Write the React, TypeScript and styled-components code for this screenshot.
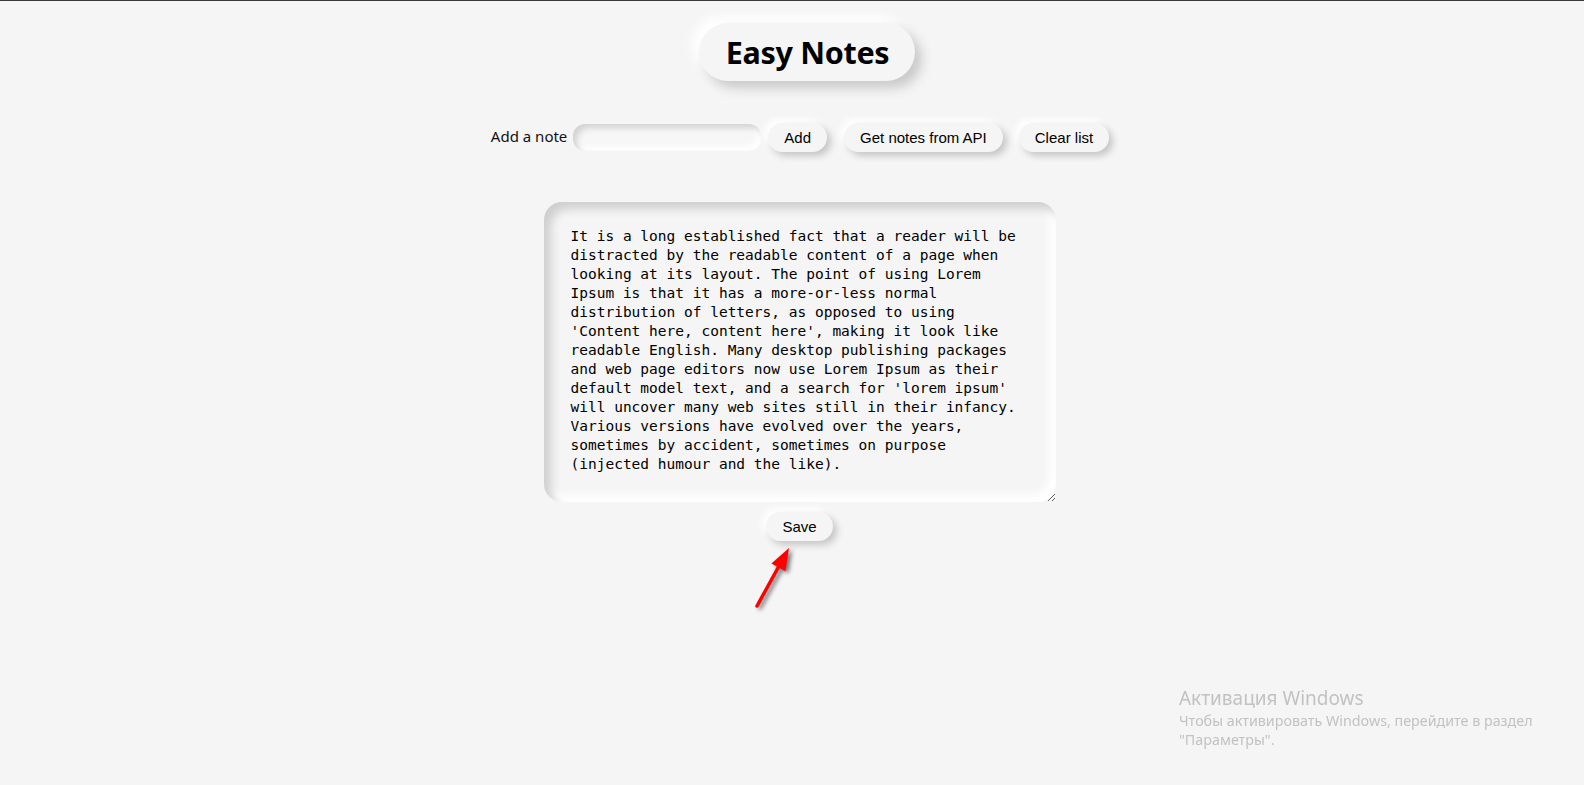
import React from "react";
import styled, { createGlobalStyle } from "styled-components";

const GlobalStyle = createGlobalStyle`
  html, body {
    margin: 0;
    padding: 0;
    background: #f5f5f5;
  }
  body {
    border-top: 1px solid #3a3a3a;
    min-height: 784px;
    font-family: "Noto Sans", "Open Sans", sans-serif;
  }
`;

const Page = styled.main`
  display: flex;
  flex-direction: column;
  align-items: center;
  padding-left: 15px;
`;

const Header = styled.header`
  margin-top: 22px;
  padding-left: 15px;
  display: flex;
  justify-content: center;
`;

const Title = styled.h1`
  margin: 0;
  height: 58px;
  padding: 0 26px 0 27px;
  display: flex;
  align-items: center;
  border-radius: 29px;
  background: #f5f5f5;
  font-family: "Noto Sans", "Open Sans", sans-serif;
  font-weight: 700;
  font-size: 30.5px;
  letter-spacing: -0.3px;
  color: #000;
  box-shadow: 7px 7px 12px #c9c9c9, -7px -7px 12px #ffffff;
`;

const Controls = styled.div`
  margin-top: 42px;
  display: flex;
  align-items: center;
  padding-left: 1px;
`;

const Label = styled.label`
  font-family: "Noto Sans", "Open Sans", sans-serif;
  font-size: 15px;
  color: #111;
  margin-right: 6px;
  padding-bottom: 3px;
`;

const NoteInput = styled.input`
  box-sizing: border-box;
  width: 188px;
  height: 27px;
  border: none;
  outline: none;
  border-radius: 12px;
  background: #f7f7f7;
  padding: 0 10px;
  box-shadow: inset 4px 4px 6px #d2d2d2, inset -4px -4px 6px #ffffff;
  margin-right: 7px;
`;

const Button = styled.button<{ $gap?: number }>`
  box-sizing: border-box;
  height: 29px;
  padding: 0 16px;
  border: none;
  border-radius: 15px;
  background: #f5f5f5;
  font-family: "Liberation Sans", Arial, sans-serif;
  font-size: 15px;
  color: #000;
  cursor: pointer;
  margin-right: ${(p) => p.$gap ?? 0}px;
  box-shadow: 4px 4px 7px #c6c6c6, -4px -4px 7px #ffffff;
`;

const Editor = styled.textarea`
  box-sizing: border-box;
  margin-top: 50px;
  width: 512px;
  height: 300px;
  padding: 25px 27px;
  border: none;
  outline: none;
  border-radius: 18px;
  background: #f5f5f5;
  font-family: "DejaVu Sans Mono", "Liberation Mono", monospace;
  font-size: 14.5px;
  line-height: 19px;
  color: #000;
  box-shadow: inset 7px 7px 10px #cfcfcf, inset -7px -7px 10px #ffffff;
`;

const SaveWrap = styled.div`
  position: relative;
  margin-top: 10px;
`;

const Arrow = styled.svg`
  position: absolute;
  left: -15px;
  top: 30px;
  width: 50px;
  height: 80px;
  overflow: visible;
  filter: drop-shadow(3px 2px 2px rgba(0, 0, 0, 0.55));
`;

const Watermark = styled.div`
  position: fixed;
  left: 1179px;
  top: 685px;
  color: #c2c2c2;
  font-family: "Noto Sans", "Open Sans", sans-serif;
  pointer-events: none;
`;

const WatermarkTitle = styled.div`
  font-size: 19px;
  line-height: 26px;
`;

const WatermarkText = styled.div`
  font-size: 14.3px;
  line-height: 19px;
`;

const TEXT =
  "It is a long established fact that a reader will be distracted by the readable content of a page when looking at its layout. The point of using Lorem Ipsum is that it has a more-or-less normal distribution of letters, as opposed to using 'Content here, content here', making it look like readable English. Many desktop publishing packages and web page editors now use Lorem Ipsum as their default model text, and a search for 'lorem ipsum' will uncover many web sites still in their infancy. Various versions have evolved over the years, sometimes by accident, sometimes on purpose (injected humour and the like).";

export default function App() {
  return (
    <>
      <GlobalStyle />
      <Page>
        <Header>
          <Title>Easy Notes</Title>
        </Header>
        <Controls>
          <Label htmlFor="note">Add a note</Label>
          <NoteInput id="note" type="text" />
          <Button $gap={17}>Add</Button>
          <Button $gap={16}>Get notes from API</Button>
          <Button>Clear list</Button>
        </Controls>
        <Editor defaultValue={TEXT} spellCheck={false} />
        <SaveWrap>
          <Button>Save</Button>
          <Arrow viewBox="0 0 50 80">
            <line x1="6" y1="64" x2="28" y2="24" stroke="#ff0000" strokeWidth="3.5" strokeLinecap="round" />
            <polygon points="38,6 34.4,29.2 20.4,21.4" fill="#ff0000" />
          </Arrow>
        </SaveWrap>
      </Page>
      <Watermark>
        <WatermarkTitle>Активация Windows</WatermarkTitle>
        <WatermarkText>Чтобы активировать Windows, перейдите в раздел</WatermarkText>
        <WatermarkText>"Параметры".</WatermarkText>
      </Watermark>
    </>
  );
}
